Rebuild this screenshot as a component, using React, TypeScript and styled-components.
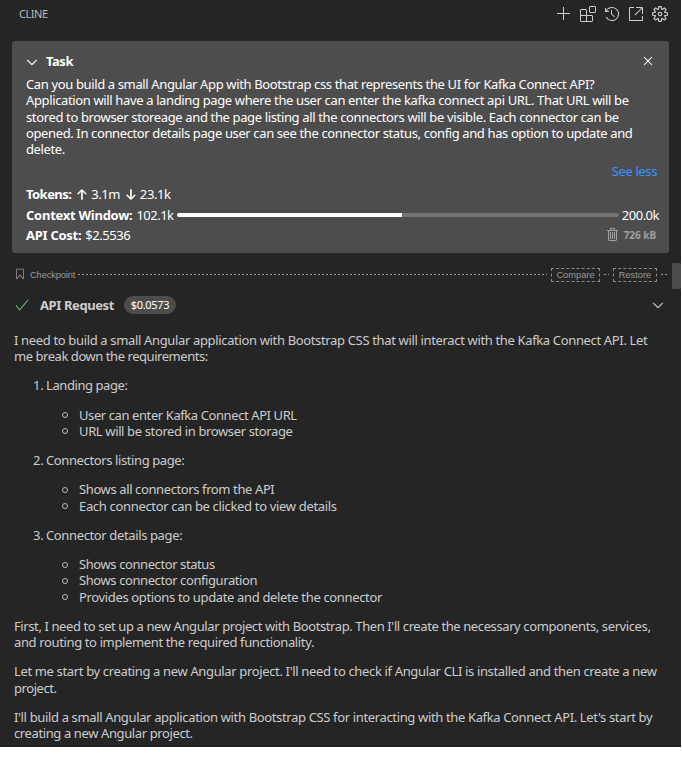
import React from "react";
import styled, { createGlobalStyle } from "styled-components";
import {
  VscAdd, VscExtensions, VscHistory, VscLinkExternal, VscSettingsGear, VscChevronDown,
  VscClose, VscTrash, VscBookmark, VscCheck, VscArrowUp, VscArrowDown,
} from "react-icons/vsc";

const Global = createGlobalStyle`
  * { box-sizing: border-box; }
  body { margin: 0; background: #fff; }
`;

const Panel = styled.div`
  position: relative;
  width: 681px;
  height: 747px;
  overflow: hidden;
  background: #252526;
  border-bottom: 1px solid #1b1b1c;
  color: #cccccc;
  font-family: "Noto Sans", "Open Sans", sans-serif;
  font-size: 13px;
  line-height: 16.25px;
  svg { display: block; flex: none; }
`;

const TitleBar = styled.header`
  display: flex;
  justify-content: space-between;
  align-items: center;
  height: 28px;
  padding: 0 13px 0 19px;
  color: #bbbbbb;
  font-size: 11px;
`;

const Actions = styled.div`
  display: flex;
  gap: 8px;
  color: #cccccc;
`;

const TaskCard = styled.section`
  width: 657px;
  height: 212px;
  margin: 13px 0 0 12px;
  padding: 11px 10px 0 14px;
  background: #4d4d4d;
  border-radius: 3px;
  color: #ffffff;
`;

const CardHead = styled.div`
  display: flex;
  align-items: center;
  height: 19px;
  padding-right: 3px;
  svg:first-child { margin: 0 -2px; stroke-width: 0.4px; }
  svg:last-child { margin: -1px 0 0 auto; }
`;

const Heading = styled.strong<{ $gap?: number }>`
  margin-left: ${(p) => p.$gap ?? 6}px;
`;

const TaskText = styled.div`
  height: 82px;
  margin-top: 5.2px;
  line-height: 16.3px;
`;

const Line = styled.span<{ $ls?: number }>`
  display: block;
  width: max-content;
  white-space: nowrap;
  letter-spacing: ${(p) => p.$ls ?? 0}px;
`;

const SeeLess = styled.div`
  display: flex;
  justify-content: flex-end;
  margin-top: 4.8px;
  padding-right: 2px;
  color: #3794ff;
`;

const Stat = styled.div<{ $top?: number }>`
  display: flex;
  align-items: center;
  height: 20.5px;
  margin-top: ${(p) => p.$top ?? 0}px;
  white-space: nowrap;
`;

const Arrow = styled.span`
  display: flex;
  margin: 1px 3px 0 4px;
  svg { stroke-width: 1px; }
`;

const Track = styled.div`
  flex: 1;
  height: 4px;
  margin: 0 3px 0 3px;
  border-radius: 2px;
  background: #727272;
`;

const Fill = styled.div`
  width: 51%;
  height: 4px;
  border-radius: 2px 0 0 2px;
  background: #ffffff;
`;

const Size = styled.div`
  display: flex;
  align-items: center;
  gap: 3px;
  margin-left: auto;
  padding-right: 3px;
  color: #a0a0a0;
  font-size: 10px;
  font-weight: 700;
`;

const Checkpoint = styled.div`
  display: flex;
  align-items: center;
  height: 17px;
  margin-top: 13px;
  padding: 0 14px 0 14px;
  color: #9a9a9b;
  font: 9.3px/12px "Liberation Sans", sans-serif;
  > svg { margin-top: -1px; }
`;

const CheckpointLabel = styled.span`
  margin: 1px 3px 0 4px;
  letter-spacing: -0.12px;
`;

const Dashes = styled.i<{ $w?: number }>`
  ${(p) => (p.$w ? `width: ${p.$w}px;` : "flex: 1;")}
  height: 1px;
  background: repeating-linear-gradient(90deg, #9a9a9b 0 2px, transparent 2px 4px);
`;

const DashButton = styled.button<{ $w: number; $shift?: number }>`
  width: ${(p) => p.$w}px;
  height: 14px;
  margin: ${(p) => p.$shift ?? 0}px 4px 0;
  padding: 0;
  border: 1px dashed #8a8a8b;
  background: none;
  color: inherit;
  font: 9.3px/12px "Liberation Sans", sans-serif;
`;

const RequestRow = styled.div`
  display: flex;
  align-items: center;
  height: 20px;
  margin-top: 12px;
  padding: 0 15px 0 14px;
  > svg:last-child { margin-left: auto; stroke-width: 0.4px; }
`;

const Badge = styled.span`
  display: flex;
  align-items: center;
  justify-content: center;
  width: 52px;
  height: 18px;
  margin-left: 10px;
  border-radius: 9px;
  background: #4d4d4d;
  color: #ffffff;
  font-size: 11px;
`;

const Prose = styled.div`
  padding: 16.87px 14px 0;
  p { margin: 0 0 13px; }
`;

const Steps = styled.ol`
  margin: 0 0 13px;
  padding: 0 0 0 19px;
  list-style: none;
`;

const Row = styled.div`
  display: flex;
`;

const Num = styled.span`
  width: 13px;
  letter-spacing: -0.3px;
`;

const Sub = styled.ul`
  margin: 13px 0;
  padding: 0 0 0 30px;
  list-style: none;
  li { display: flex; align-items: center; }
`;

const Bullet = styled.i`
  width: 6px;
  height: 6px;
  margin: 1px 11px 0 -1px;
  border: 1px solid #bdbdbd;
  border-radius: 50%;
`;

const ScrollThumb = styled.div`
  position: absolute;
  top: 263px;
  right: 0;
  width: 9px;
  height: 26px;
  background: #4b4b4b;
`;

// Each line carries its text and its tracking in pixels.
type L = [string, number];
const task: L[] = [
  ["Can you build a small Angular App with Bootstrap css that represents the UI for Kafka Connect API?", -0.368],
  ["Application will have a landing page where the user can enter the kafka connect api URL. That URL will be", -0.363],
  ["stored to browser storeage and the page listing all the connectors will be visible. Each connector can be", -0.36],
  ["opened. In connector details page user can see the connector status, config and has option to update and", -0.382],
  ["delete.", -0.4],
];
const intro: L[] = [
  ["I need to build a small Angular application with Bootstrap CSS that will interact with the Kafka Connect API. Let", -0.347],
  ["me break down the requirements:", -0.45],
];
const steps: { title: L; items: L[] }[] = [
  {
    title: ["Landing page:", -0.42],
    items: [["User can enter Kafka Connect API URL", -0.41], ["URL will be stored in browser storage", -0.37]],
  },
  {
    title: ["Connectors listing page:", -0.39],
    items: [["Shows all connectors from the API", -0.39], ["Each connector can be clicked to view details", -0.33]],
  },
  {
    title: ["Connector details page:", -0.37],
    items: [
      ["Shows connector status", -0.41],
      ["Shows connector configuration", -0.41],
      ["Provides options to update and delete the connector", -0.35],
    ],
  },
];
const closing: L[][] = [
  [
    ["First, I need to set up a new Angular project with Bootstrap. Then I'll create the necessary components, services,", -0.397],
    ["and routing to implement the required functionality.", -0.365],
  ],
  [
    ["Let me start by creating a new Angular project. I'll need to check if Angular CLI is installed and then create a new", -0.352],
    ["project.", -0.43],
  ],
  [
    ["I'll build a small Angular application with Bootstrap CSS for interacting with the Kafka Connect API. Let's start by", -0.355],
    ["creating a new Angular project.", -0.385],
  ],
];

const Lines = ({ of }: { of: L[] }) => (
  <>{of.map(([t, ls]) => <Line key={t} $ls={ls}>{t}</Line>)}</>
);

export default function App() {
  return (
    <>
      <Global />
      <Panel>
        <TitleBar>
          <Line $ls={-0.45}>CLINE</Line>
          <Actions>
            <VscAdd size={16} /><VscExtensions size={16} /><VscHistory size={16} />
            <VscLinkExternal size={16} /><VscSettingsGear size={16} />
          </Actions>
        </TitleBar>
        <TaskCard>
          <CardHead>
            <VscChevronDown size={16} />
            <Heading $gap={8}><Line $ls={-0.45}>Task</Line></Heading>
            <VscClose size={16} />
          </CardHead>
          <TaskText><Lines of={task} /></TaskText>
          <SeeLess><Line $ls={-0.38}>See less</Line></SeeLess>
          <Stat $top={5}>
            <strong><Line $ls={-0.55}>Tokens:</Line></strong>
            <Arrow><VscArrowUp size={13} /></Arrow>
            <Line $ls={-0.5}>3.1m</Line>
            <Arrow><VscArrowDown size={13} /></Arrow>
            <Line $ls={-0.4}>23.1k</Line>
          </Stat>
          <Stat>
            <strong><Line $ls={-0.26}>Context Window:&nbsp;</Line></strong>
            <Line $ls={-0.5}>&#8202;102.1k</Line>
            <Track><Fill /></Track>
            <Line $ls={-0.5}>200.0k</Line>
          </Stat>
          <Stat>
            <strong><Line $ls={-0.28}>API Cost:&nbsp;</Line></strong>
            <Line $ls={-0.45}>&#8202;$2.5536</Line>
            <Size><VscTrash size={16} /><Line $ls={-0.05}>726 kB</Line></Size>
          </Stat>
        </TaskCard>
        <Checkpoint>
          <VscBookmark size={12} />
          <CheckpointLabel>Checkpoint</CheckpointLabel>
          <Dashes />
          <DashButton $w={49}>Compare</DashButton>
          <Dashes $w={5} />
          <DashButton $w={44} $shift={1}>Restore</DashButton>
          <Dashes $w={6} />
        </Checkpoint>
        <RequestRow>
          <VscCheck size={16} color="#73c970" />
          <Heading $gap={10}><Line $ls={-0.4}>API Request</Line></Heading>
          <Badge><Line $ls={-0.3}>$0.0573</Line></Badge>
          <VscChevronDown size={16} />
        </RequestRow>
        <Prose>
          <p><Lines of={intro} /></p>
          <Steps>
            {steps.map((s, i) => (
              <li key={i}>
                <Row><Num>{i + 1}.</Num><Lines of={[s.title]} /></Row>
                <Sub>{s.items.map((it) => <li key={it[0]}><Bullet /><Lines of={[it]} /></li>)}</Sub>
              </li>
            ))}
          </Steps>
          {closing.map((c, i) => <p key={i}><Lines of={c} /></p>)}
        </Prose>
        <ScrollThumb />
      </Panel>
    </>
  );
}
